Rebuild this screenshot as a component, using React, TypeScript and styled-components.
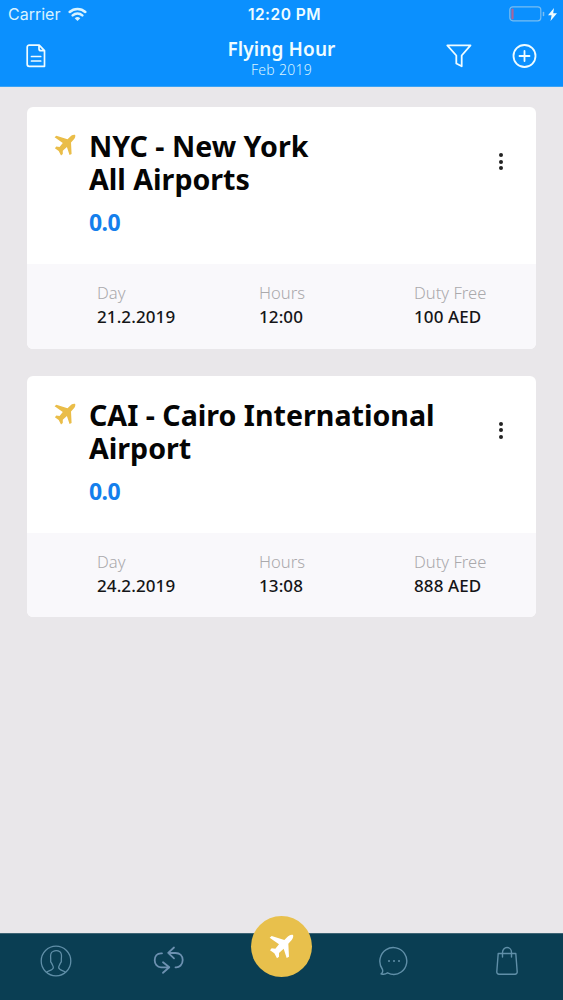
import styled, { createGlobalStyle } from 'styled-components'

const GlobalStyle = createGlobalStyle`
  * {
    box-sizing: border-box;
  }
  body {
    margin: 0;
    background: #e9e7ea;
    font-family: 'Noto Sans', 'Open Sans', sans-serif;
  }
  svg {
    display: block;
    fill: none;
    stroke: currentColor;
    stroke-linecap: round;
    stroke-linejoin: round;
  }
`

const Screen = styled.div`
  display: flex;
  flex-direction: column;
  height: 1000px;
  overflow: hidden;
`

const Header = styled.header`
  height: 87px;
  flex: none;
  background: #0b90fe;
  border-bottom: 1px solid #3aa3f5;
  color: #effcff;
`

const StatusBar = styled.div`
  display: grid;
  grid-template-columns: 1fr auto 1fr;
  align-items: center;
  height: 28px;
  padding: 0 6px 0 8px;
  font-family: Inter, 'Liberation Sans', sans-serif;
  font-size: 16px;
`

const Carrier = styled.div`
  display: flex;
  align-items: center;
  gap: 8px;
  color: #d8f3ff;
`

const Clock = styled.div`
  font-size: 15.5px;
  font-weight: 600;
  letter-spacing: 0.5px;
  padding-left: 4px;
`

const Power = styled.div`
  display: flex;
  justify-content: flex-end;
  align-items: center;
  gap: 3px;
`

const Toolbar = styled.div`
  display: grid;
  grid-template-columns: 1fr auto 1fr;
  padding: 0 26px;
`

const Tools = styled.div<{ $end?: boolean }>`
  display: flex;
  justify-content: ${({ $end }) => ($end ? 'flex-end' : 'flex-start')};
  gap: 40px;
  padding-top: 16px;
`

const Heading = styled.div`
  text-align: center;
  padding-top: 9px;
`

const HeadingTitle = styled.h1`
  margin: 0;
  font-size: 19px;
  line-height: 24px;
  font-weight: 600;
  letter-spacing: 0.1px;
`

const HeadingDate = styled.div`
  font-size: 14px;
  line-height: 17px;
  font-weight: 300;
  letter-spacing: 0.3px;
  color: #d8f3ff;
`

const List = styled.main`
  flex: 1;
  display: flex;
  flex-direction: column;
  gap: 27px;
  padding: 20px 27px;
`

const Card = styled.article`
  border-radius: 6px;
  overflow: hidden;
  background: #fff;
`

const CardBody = styled.div`
  display: flex;
  height: 157px;
  padding: 22px 29px 0 27px;
`

const PlaneSlot = styled.div`
  width: 35px;
  padding-top: 5px;
  color: #eabd48;
`

const CardText = styled.div`
  flex: 1;
`

const Airport = styled.h2`
  margin: 0;
  font-size: 28.6px;
  line-height: 33px;
  font-weight: 700;
  color: #050505;
  white-space: pre-line;
`

const Score = styled.div`
  margin-top: 11px;
  font-size: 23px;
  line-height: 32px;
  font-weight: 700;
  letter-spacing: -0.6px;
  color: #147fec;
`

const MenuButton = styled.button`
  display: flex;
  flex-direction: column;
  align-items: center;
  align-self: flex-start;
  gap: 2.5px;
  margin-top: 24px;
  padding: 0 4px 0 0;
  border: 0;
  background: none;
`

const Dot = styled.span`
  width: 4px;
  height: 4px;
  border-radius: 50%;
  background: #222;
`

const Details = styled.dl`
  display: grid;
  grid-template-columns: 162px 155px 1fr;
  height: 84.5px;
  margin: 0;
  padding: 17px 0 0 70px;
  background: #f9f8fb;
`

const Label = styled.dt`
  font-size: 16.6px;
  line-height: 24px;
  font-weight: 300;
  color: #aaa9ac;
`

const Value = styled.dd`
  margin: 0;
  font-size: 17px;
  line-height: 24px;
  font-weight: 500;
  letter-spacing: 0.1px;
  color: #151517;
`

const TabBar = styled.nav`
  display: grid;
  grid-template-columns: repeat(5, 1fr);
  justify-items: center;
  flex: none;
  height: 67px;
  background: #0a3e53;
  border-top: 1px solid #3d6474;
`

const Tab = styled.button`
  align-self: start;
  margin-top: 10.5px;
  padding: 0;
  border: 0;
  background: none;
  color: #608fa8;
`

const FlightTab = styled.button`
  display: grid;
  place-items: center;
  width: 61px;
  height: 61px;
  margin-top: -18px;
  padding: 0;
  border: 0;
  border-radius: 50%;
  background: #e8c04c;
  color: #fff;
`

function Plane({ size }: { size: number }) {
  return (
    <svg width={size} height={size} viewBox='119 88 75 75'>
      <path
        fill='currentColor'
        stroke='none'
        d='M191 91C185 89 178 93 174 97L165 106L127 94L121 99L149 119L138 132L127 131L122 137L135 146L143 161L149 156L149 145L163 132L172 160L179 156L177 117L187 106C191 101 193 94 191 91Z'
      />
    </svg>
  )
}

function WifiIcon() {
  return (
    <svg width='19' height='14' viewBox='0 0 19 14'>
      <path strokeWidth='2.5' d='M1.7 5a11.3 11.3 0 0 1 15.6 0M4.7 8.4a7 7 0 0 1 9.6 0' />
      <path fill='currentColor' stroke='none' d='M6.7 11.2a4.2 4.2 0 0 1 5.6 0L9.5 14Z' />
    </svg>
  )
}

function BatteryIcon() {
  return (
    <svg width='36' height='16' viewBox='0 0 36 16'>
      <rect x='.8' y='.8' width='31' height='14' rx='3' stroke='#78bdf2' strokeWidth='1.2' />
      <path d='M3.5 3.5v9' stroke='#a9659b' strokeWidth='2.2' />
      <path d='M34.5 6.5v3' stroke='#78bdf2' strokeWidth='1.5' />
    </svg>
  )
}

function BoltIcon() {
  return (
    <svg width='9' height='13' viewBox='0 0 9 13'>
      <path fill='currentColor' stroke='none' d='M6 0L0 7.3h3.6L2.5 13L9 5.3H5.2Z' />
    </svg>
  )
}

function DocumentIcon() {
  return (
    <svg width='20' height='24' viewBox='0 0 20 24' strokeWidth='1.7'>
      <path d='M3.5 1.2h9.7l5.3 5.5v15.6H3.2a2 2 0 0 1-2-2v-17a2 2 0 0 1 2.3-2.1ZM13 1.5v3.2a2 2 0 0 0 2 2h3.3M5.5 12.5h9.2M5.5 17h9.2' />
    </svg>
  )
}

function FilterIcon() {
  return (
    <svg width='26' height='24' viewBox='0 0 26 24' strokeWidth='1.8'>
      <path d='M1.3 1.3h23.2l-8.8 10.2v10.8l-5.4-2.8v-8Z' />
    </svg>
  )
}

function AddIcon() {
  return (
    <svg width='25' height='24' viewBox='0 0 25 24' strokeWidth='1.8'>
      <circle cx='12.5' cy='12' r='11' />
      <path d='M7.5 12h10M12.5 7v10' />
    </svg>
  )
}

function ProfileIcon() {
  return (
    <svg width='32' height='32' viewBox='0 0 32 32' strokeWidth='1.3'>
      <circle cx='16' cy='16' r='14.8' />
      <path d='M6.5 27.3c1.5-2 6.5-1.8 6.8-4.6.2-1.6-1-2.7-1.5-4.2-.9-1-1.4-3-1.1-4.2-.4-3.5-.3-6.9 2.2-7.8 2-.9 5.3-.8 7 .3 1.9 1.3 1.8 4.7 1.4 7.5.3 1.2-.2 3.2-1.1 4.2-.5 1.5-1.7 2.6-1.5 4.2.3 2.8 5.3 2.6 6.8 4.6' />
    </svg>
  )
}

function SwapIcon() {
  return (
    <svg width='32' height='32' viewBox='0 0 32 32' strokeWidth='1.8' color='#6d91b1'>
      <path d='M9 8.3h-1C4 8.3 1.7 11.5 1.7 15.2S4.2 22.3 8 22.3h8M10 17.3l6.3 5-6.3 5.5M22.5 22.3c4 .4 7.2-2.8 7.2-7.2S26.8 8 22.5 8H15.5M21 2.5l-5.8 5.3L21 13.3' />
    </svg>
  )
}

function ChatIcon() {
  return (
    <svg width='30' height='32' viewBox='0 0 30 32' strokeWidth='1.4'>
      <path d='M2 28.8c2-.7 2-2.2 1.5-4.3C-1.5 17.5 1 8.5 7.2 4.6c6-3.8 14-2.2 18.2 3.8 4.2 6 2.7 14.3-3.2 18.6-4 2.8-9.3 3-13.6.8-1.8 1.3-4 2-6.6 1Z' />
      <path strokeWidth='2' d='M10 16h.01M15 16h.01M20 16h.01' />
    </svg>
  )
}

function BagIcon() {
  return (
    <svg width='24' height='32' viewBox='0 0 24 32' strokeWidth='1.4'>
      <path d='M3.2 8.5h17.6l1.4 18.3a2.2 2.2 0 0 1-2.2 2.4H4a2.2 2.2 0 0 1-2.2-2.4ZM7.5 12V7.5a4.5 5 0 0 1 9 0V12' />
    </svg>
  )
}

const flights = [
  {
    airport: 'NYC - New York\nAll Airports',
    score: '0.0',
    details: { Day: '21.2.2019', Hours: '12:00', 'Duty Free': '100 AED' },
  },
  {
    airport: 'CAI - Cairo International\nAirport',
    score: '0.0',
    details: { Day: '24.2.2019', Hours: '13:08', 'Duty Free': '888 AED' },
  },
]

function FlightCard({ airport, score, details }: (typeof flights)[number]) {
  return (
    <Card>
      <CardBody>
        <PlaneSlot>
          <Plane size={22} />
        </PlaneSlot>
        <CardText>
          <Airport>{airport}</Airport>
          <Score>{score}</Score>
        </CardText>
        <MenuButton aria-label='More'>
          <Dot />
          <Dot />
          <Dot />
        </MenuButton>
      </CardBody>
      <Details>
        {Object.entries(details).map(([label, value]) => (
          <div key={label}>
            <Label>{label}</Label>
            <Value>{value}</Value>
          </div>
        ))}
      </Details>
    </Card>
  )
}

export default function App() {
  return (
    <Screen>
      <GlobalStyle />
      <Header>
        <StatusBar>
          <Carrier>
            Carrier
            <WifiIcon />
          </Carrier>
          <Clock>12:20 PM</Clock>
          <Power>
            <BatteryIcon />
            <BoltIcon />
          </Power>
        </StatusBar>
        <Toolbar>
          <Tools>
            <DocumentIcon />
          </Tools>
          <Heading>
            <HeadingTitle>Flying Hour</HeadingTitle>
            <HeadingDate>Feb 2019</HeadingDate>
          </Heading>
          <Tools $end>
            <FilterIcon />
            <AddIcon />
          </Tools>
        </Toolbar>
      </Header>
      <List>
        {flights.map((flight) => (
          <FlightCard key={flight.airport} {...flight} />
        ))}
      </List>
      <TabBar>
        <Tab aria-label='Profile'>
          <ProfileIcon />
        </Tab>
        <Tab aria-label='Swap'>
          <SwapIcon />
        </Tab>
        <FlightTab aria-label='Flights'>
          <Plane size={25} />
        </FlightTab>
        <Tab aria-label='Chat'>
          <ChatIcon />
        </Tab>
        <Tab aria-label='Shop'>
          <BagIcon />
        </Tab>
      </TabBar>
    </Screen>
  )
}
